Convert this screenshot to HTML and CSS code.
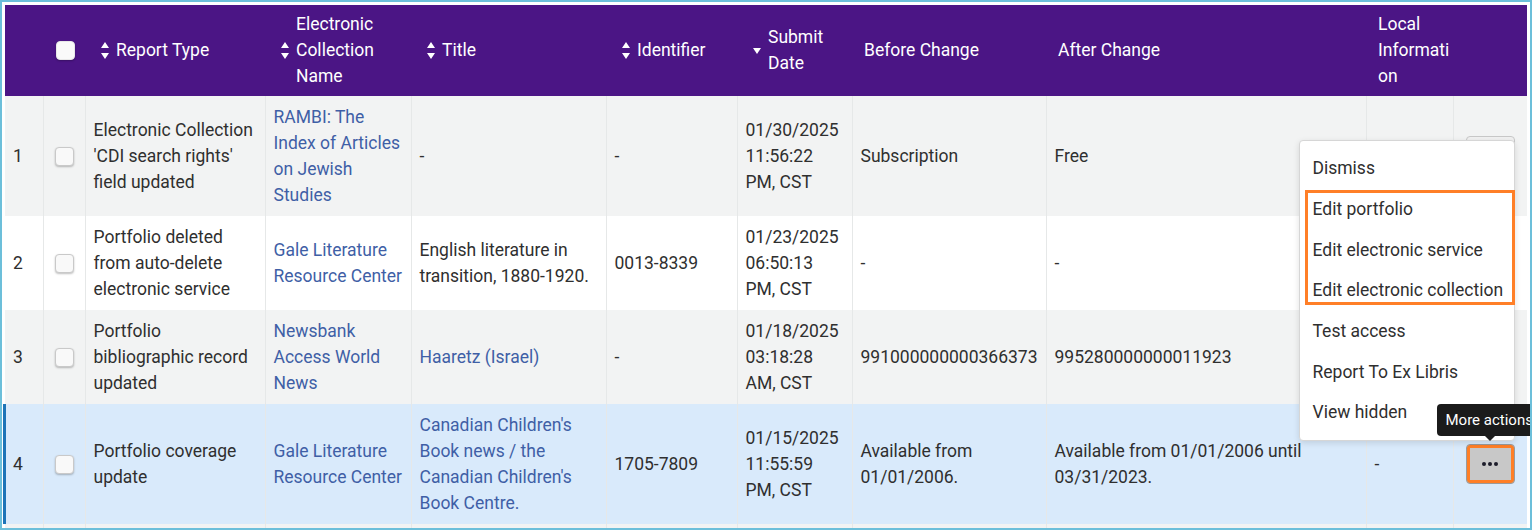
FILE: index.html
```html
<!DOCTYPE html>
<html lang="en">
<head>
    <meta charset="UTF-8">
    <title>Electronic Resource Change Report</title>
    <link rel="stylesheet" href="styles.css">
</head>
<body>
    <div class="frame">
        <table class="report-table">
            <colgroup>
                <col style="width: 38px">
                <col style="width: 42px">
                <col style="width: 180px">
                <col style="width: 146px">
                <col style="width: 195px">
                <col style="width: 131px">
                <col style="width: 115px">
                <col style="width: 194px">
                <col style="width: 320px">
                <col style="width: 87px">
                <col style="width: 74px">
            </colgroup>
            <thead>
                <tr>
                    <th></th>
                    <th class="check-cell"><input type="checkbox" class="check check-head"></th>
                    <th><div class="th-inner"><svg class="sort-icon" width="8" height="17" viewBox="0 0 8 17"><path d="M0 6 L4 0 L8 6 Z M0 11 L8 11 L4 17 Z" fill="#fff"/></svg><span>Report Type</span></div></th>
                    <th><div class="th-inner"><svg class="sort-icon" width="8" height="17" viewBox="0 0 8 17"><path d="M0 6 L4 0 L8 6 Z M0 11 L8 11 L4 17 Z" fill="#fff"/></svg><span>Electronic Collection Name</span></div></th>
                    <th><div class="th-inner"><svg class="sort-icon" width="8" height="17" viewBox="0 0 8 17"><path d="M0 6 L4 0 L8 6 Z M0 11 L8 11 L4 17 Z" fill="#fff"/></svg><span>Title</span></div></th>
                    <th><div class="th-inner"><svg class="sort-icon" width="8" height="17" viewBox="0 0 8 17"><path d="M0 6 L4 0 L8 6 Z M0 11 L8 11 L4 17 Z" fill="#fff"/></svg><span>Identifier</span></div></th>
                    <th><div class="th-inner"><svg class="sort-icon" width="8" height="17" viewBox="0 0 8 17"><path d="M0 6 L8 6 L4 12 Z" fill="#fff"/></svg><span>Submit Date</span></div></th>
                    <th><div class="th-inner"><span>Before Change</span></div></th>
                    <th><div class="th-inner"><span>After Change</span></div></th>
                    <th class="th-narrow"><div class="th-inner"><span class="break">Local Information</span></div></th>
                    <th></th>
                </tr>
            </thead>
            <tbody>
                <tr class="row-alt">
                    <td>1</td>
                    <td class="check-cell"><input type="checkbox" class="check"></td>
                    <td>Electronic Collection 'CDI search rights' field updated</td>
                    <td><a href="#">RAMBI: The Index of Articles on Jewish Studies</a></td>
                    <td>-</td>
                    <td>-</td>
                    <td>01/30/2025 11:56:22 PM, CST</td>
                    <td>Subscription</td>
                    <td>Free</td>
                    <td>-</td>
                    <td class="action-cell"><button class="more-btn"><svg width="16" height="4" viewBox="0 0 16 4"><circle cx="2" cy="2" r="2"/><circle cx="8" cy="2" r="2"/><circle cx="14" cy="2" r="2"/></svg></button></td>
                </tr>
                <tr>
                    <td>2</td>
                    <td class="check-cell"><input type="checkbox" class="check"></td>
                    <td>Portfolio deleted from auto-delete electronic service</td>
                    <td><a href="#">Gale Literature Resource Center</a></td>
                    <td>English literature in transition, 1880-1920.</td>
                    <td>0013-8339</td>
                    <td>01/23/2025 06:50:13 PM, CST</td>
                    <td>-</td>
                    <td>-</td>
                    <td>-</td>
                    <td class="action-cell"><button class="more-btn"><svg width="16" height="4" viewBox="0 0 16 4"><circle cx="2" cy="2" r="2"/><circle cx="8" cy="2" r="2"/><circle cx="14" cy="2" r="2"/></svg></button></td>
                </tr>
                <tr class="row-alt">
                    <td>3</td>
                    <td class="check-cell"><input type="checkbox" class="check"></td>
                    <td>Portfolio bibliographic record updated</td>
                    <td><a href="#">Newsbank Access World News</a></td>
                    <td><a href="#">Haaretz (Israel)</a></td>
                    <td>-</td>
                    <td>01/18/2025 03:18:28 AM, CST</td>
                    <td>991000000000366373</td>
                    <td>995280000000011923</td>
                    <td>-</td>
                    <td class="action-cell"><button class="more-btn"><svg width="16" height="4" viewBox="0 0 16 4"><circle cx="2" cy="2" r="2"/><circle cx="8" cy="2" r="2"/><circle cx="14" cy="2" r="2"/></svg></button></td>
                </tr>
                <tr class="row-selected">
                    <td>4</td>
                    <td class="check-cell"><input type="checkbox" class="check"></td>
                    <td>Portfolio coverage update</td>
                    <td><a href="#">Gale Literature Resource Center</a></td>
                    <td><a href="#">Canadian Children's Book news / the Canadian Children's Book Centre.</a></td>
                    <td>1705-7809</td>
                    <td>01/15/2025 11:55:59 PM, CST</td>
                    <td>Available from 01/01/2006.</td>
                    <td>Available from 01/01/2006 until 03/31/2023.</td>
                    <td>-</td>
                    <td class="action-cell">
                        <div class="action-anchor">
                            <div class="menu">
                                <div class="menu-item">Dismiss</div>
                                <div class="menu-group">
                                    <div class="menu-item">Edit portfolio</div>
                                    <div class="menu-item">Edit electronic service</div>
                                    <div class="menu-item">Edit electronic collection</div>
                                </div>
                                <div class="menu-item">Test access</div>
                                <div class="menu-item">Report To Ex Libris</div>
                                <div class="menu-item">View hidden</div>
                            </div>
                            <div class="tooltip">More actions</div>
                            <button class="more-btn active"><svg width="16" height="4" viewBox="0 0 16 4"><circle cx="2" cy="2" r="2"/><circle cx="8" cy="2" r="2"/><circle cx="14" cy="2" r="2"/></svg></button>
                        </div>
                    </td>
                </tr>
                <tr class="row-alt row-next">
                    <td></td>
                    <td></td>
                    <td></td>
                    <td></td>
                    <td></td>
                    <td></td>
                    <td></td>
                    <td></td>
                    <td></td>
                    <td></td>
                    <td></td>
                </tr>
            </tbody>
        </table>
    </div>
</body>
</html>
```

FILE: styles.css
```css
html, body {
    margin: 0;
    padding: 0;
    overflow: hidden;
    background: #fff;
}
body {
    font-family: Roboto, 'Noto Sans', Arial, sans-serif;
    font-size: 17.5px;
    line-height: 26px;
    color: #2f2f2f;
}
.frame {
    box-sizing: border-box;
    height: 100vh;
    border: 2px solid #6cbfda;
    padding: 3px;
    overflow: hidden;
}
.report-table {
    width: 100%;
    table-layout: fixed;
    border-collapse: collapse;
}
.report-table th {
    background: #4b1585;
    color: #fff;
    font-weight: 400;
    text-align: left;
    vertical-align: middle;
    padding: 6px 4px 7px 12px;
}
.report-table th.th-narrow {
    padding-right: 2px;
}
.th-inner {
    display: flex;
    align-items: center;
}
.sort-icon {
    flex: none;
    margin: 0 7px 0 4px;
}
.break {
    overflow-wrap: anywhere;
}
.report-table td {
    padding: 8px;
    vertical-align: middle;
    border-left: 1px solid #e6e8e8;
    background: #fff;
}
.report-table td:first-child {
    border-left: none;
}
.row-alt td {
    background: #f2f3f3;
}
.row-selected td {
    background: #d9eafb;
}
.row-selected td:first-child {
    box-shadow: -2px 0 0 #1d74b7, inset 1px 0 0 #1d74b7;
}
.row-next td {
    height: 60px;
}
.report-table a {
    color: #3f5fa6;
    text-decoration: none;
}
.check-cell {
    text-align: center;
}
.report-table th.check-cell {
    padding: 0;
}
.check {
    appearance: none;
    -webkit-appearance: none;
    display: block;
    margin: 0 auto 0 3px;
    width: 19px;
    height: 19px;
    border: 1px solid #c9c9c9;
    border-radius: 4px;
    background: #f9f9f9;
    box-shadow: 0 1px 2px rgba(0,0,0,0.25);
}
.check-head {
    margin: 0 auto 0 13px;
    border-color: #e8e8e8;
    background: #fafafa;
}
.action-cell {
    padding-left: 12px !important;
}
.more-btn {
    display: flex;
    align-items: center;
    justify-content: center;
    width: 49px;
    height: 40px;
    padding: 0;
    border: 1px solid #c8c8c8;
    border-radius: 4px;
    background: #f1f1f1;
    cursor: pointer;
}
.more-btn svg {
    fill: #1c1c2a;
}
.more-btn.active {
    background: #c8c8c8;
    border-color: #9a9a9a;
    box-shadow: inset 0 0 0 3px #ff7f27;
}
.action-anchor {
    position: relative;
    width: fit-content;
}
.menu {
    position: absolute;
    right: 0;
    bottom: calc(100% + 3px);
    width: 214px;
    padding: 7px 0;
    background: #fff;
    border: 1px solid #d6d6d6;
    border-radius: 4px;
    box-shadow: 0 2px 6px rgba(0,0,0,0.12);
    z-index: 2;
}
.menu-item {
    height: 40.67px;
    line-height: 40.67px;
    padding-left: 13px;
    white-space: nowrap;
    color: #2f2f2f;
}
.menu-group {
    position: relative;
}
.menu-group::after {
    content: '';
    position: absolute;
    top: 1px;
    bottom: 6px;
    left: 5px;
    right: -1px;
    border: 3px solid #ff7f27;
}
.tooltip {
    position: absolute;
    left: -29px;
    bottom: calc(100% + 8px);
    height: 32px;
    line-height: 32px;
    padding: 0 9px;
    background: #1b1b1b;
    color: #fff;
    font-size: 15px;
    border-radius: 4px;
    white-space: nowrap;
    z-index: 3;
}
.tooltip::after {
    content: '';
    position: absolute;
    left: 48px;
    top: 100%;
    border: 5px solid transparent;
    border-top-color: #1b1b1b;
    border-bottom: none;
}
```
